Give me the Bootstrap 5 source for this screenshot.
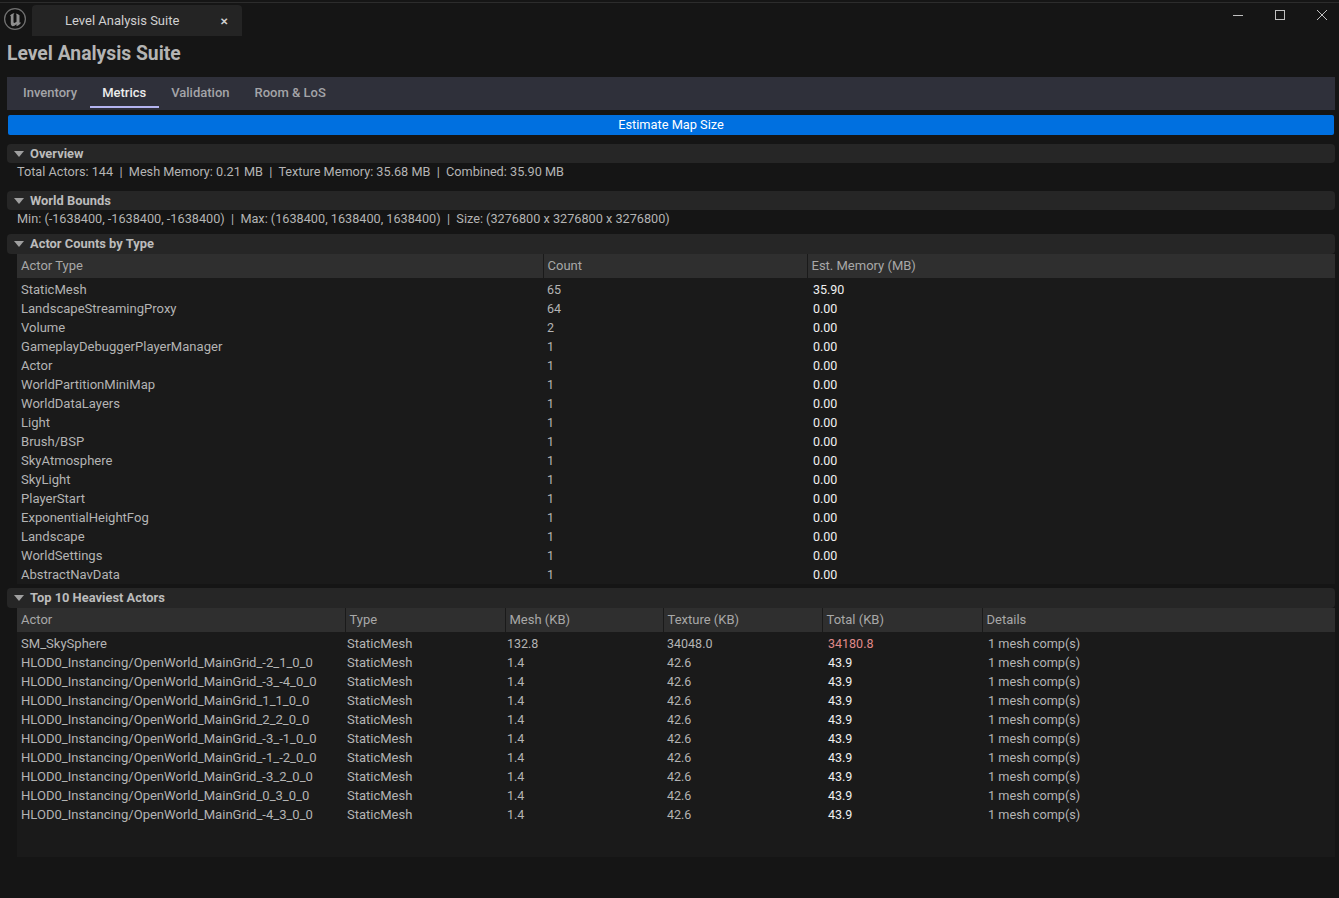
<!DOCTYPE html>
<html lang="en">
<head>
    <meta charset="UTF-8">
    <title>Level Analysis Suite</title>
    <link href="https://cdn.jsdelivr.net/npm/bootstrap@5.3.0/dist/css/bootstrap.min.css" rel="stylesheet">
    <style>
        html, body { height: 100%; }
        body { background: #151515; color: #b8b8b8; font-family: Roboto, "Liberation Sans", sans-serif; font-size: 12.5px; overflow: hidden; }
        .title-bar { height: 36px; border-top: 1px solid #2c2c2c; margin-top: 2px; padding-left: 3px; }
        .ue-logo { width: 24px; height: 24px; margin-top: 4px; }
        .doc-tab { width: 210px; height: 31px; margin-left: 5px; margin-top: 2px; background: #242424; border-radius: 4px 4px 0 0; color: #d0d0d0; padding: 1px 14px 0 33px; font-size: 13px; }
        .doc-close { font-size: 10px; font-weight: 700; color: #d0d0d0; }
        .win-group { margin-right: -4px; }
        .win-btn { width: 42px; height: 24px; }
        .page-title { font-size: 19.3px; font-weight: 700; color: #b4b4b4; margin: 0; padding: 4px 7px 0; line-height: 24px; height: 39px; }
        .main-area { padding: 0 4px 0 7px; }
        .tab-strip { background: #2f303a; height: 33px; padding-left: 3.5px; }
        .tab-item { padding: 0 12.5px; height: 31px; line-height: 31px; color: #a4a4a8; font-weight: 500; font-size: 13px; }
        .tab-item.on { color: #ececec; border-bottom: 2px solid #b4b4f0; }
        .map-btn { display: block; width: calc(100% - 2px); height: 20px; margin: 5px 1px 9px; padding: 0; border: 0; border-radius: 2px; background: #0070e0; color: #fff; font-size: 12.8px; line-height: 20px; }
        .sec-head { background: #262626; border-radius: 4px; height: 19px; line-height: 19px; padding-left: 7px; font-weight: 700; color: #bcbcbc; font-size: 12.9px; }
        .sec-head.tall { height: 20px; }
        .sec-head svg { width: 10px; height: 6px; margin-right: 6px; vertical-align: 1px; }
        .sec-text { padding-left: 10px; height: 18px; line-height: 18px; color: #b4b4b4; font-size: 12.7px; }
        .gap-a { margin-bottom: 10px; }
        .gap-b { margin-bottom: 6px; }
        .gap-c { margin-bottom: 4px; }
        .tbl-wrap { margin-left: 10px; background: #1a1a1a; }
        .data-tbl { table-layout: fixed; width: 100%; margin: 0; --bs-table-bg: transparent; --bs-table-color: #b4b4b4; border-color: transparent; font-size: 12.5px; }
        .data-tbl th { background: #2f2f2f; color: #a8a8a8; font-weight: 400; font-size: 13px; height: 24px; padding: 0 4px; border: 0; border-left: 1px solid #1a1a1a; line-height: 24px; }
        .data-tbl th:first-child { border-left: 0; }
        .data-tbl td { height: 19px; padding: 0 4px; line-height: 19px; border: 0; white-space: nowrap; overflow: hidden; }
        .data-tbl td:first-child { font-size: 13.05px; }
        .data-tbl tbody tr:first-child td { height: 21px; padding-top: 2px; }
        .val-strong { color: #f0f0f0 !important; padding-left: 6px !important; }
        .val-hot { color: #e08a8a !important; padding-left: 6px !important; }
        .val-kind { font-size: 13px; padding-left: 2px !important; }
        .val-note { font-size: 12.7px; padding-left: 6px !important; }
        .shift-n { padding-left: 2px !important; }
        .c-type { width: 526px; } .c-count { width: 264px; }
        .c-actor { width: 328px; } .c-kind { width: 160px; } .c-mesh { width: 158px; } .c-tex { width: 159px; } .c-total { width: 160px; }
        .tail { height: 33px; }
    </style>
</head>
<body>

<div class="title-bar d-flex">
    <svg class="ue-logo" viewBox="0 0 24 24">
        <circle cx="12" cy="12" r="10.4" fill="#111" stroke="#707070" stroke-width="1.3"/>
        <path d="M7 8.500C8 7.500 9.500 6.500 11.500 6 10.800 6.800 10.500 7.500 10.500 8.500V15C10.500 16.200 11.800 16.300 13.500 14.800V8.500C13.500 7.600 13.200 7 12.600 6.500 14 6.600 15.300 7.200 16.500 8.200V15.500C17 15.800 17.600 15.600 18.200 15 17.500 17 15.800 18.600 13.500 19.200V17.300C12 18.600 10.800 19.300 9.800 19.300 8.600 19 7.800 18 7.800 16.500V9.500C7.800 9 7.500 8.700 7 8.500Z" fill="#8e8e8e"/>
    </svg>
    <div class="doc-tab d-flex align-items-center justify-content-between">
        <span>Level Analysis Suite</span>
        <span class="doc-close">&#10005;</span>
    </div>
    <div class="ms-auto d-flex win-group">
        <div class="win-btn d-flex align-items-center justify-content-center">
            <svg width="12" height="12" viewBox="0 0 12 12"><path d="M1 6.500h10" stroke="#c0c0c0" stroke-width="1"/></svg>
        </div>
        <div class="win-btn d-flex align-items-center justify-content-center">
            <svg width="12" height="12" viewBox="0 0 12 12"><rect x="1.500" y="1.500" width="9" height="9" fill="none" stroke="#c0c0c0" stroke-width="1"/></svg>
        </div>
        <div class="win-btn d-flex align-items-center justify-content-center">
            <svg width="12" height="12" viewBox="0 0 12 12"><path d="M1 1l10 10M11 1L1 11" stroke="#c0c0c0" stroke-width="1"/></svg>
        </div>
    </div>
</div>

<h1 class="page-title">Level Analysis Suite</h1>

<div class="main-area">
    <div class="tab-strip d-flex">
        <div class="tab-item">Inventory</div>
        <div class="tab-item on">Metrics</div>
        <div class="tab-item">Validation</div>
        <div class="tab-item">Room &amp; LoS</div>
    </div>
    <button type="button" class="btn map-btn">Estimate Map Size</button>

    <div class="sec-head"><svg viewBox="0 0 10 6"><path d="M0 0h10L5 6z" fill="#a0a0a0"/></svg>Overview</div>
    <div class="sec-text gap-a">Total Actors: 144&nbsp; |&nbsp; Mesh Memory: 0.21 MB&nbsp; |&nbsp; Texture Memory: 35.68 MB&nbsp; |&nbsp; Combined: 35.90 MB</div>

    <div class="sec-head"><svg viewBox="0 0 10 6"><path d="M0 0h10L5 6z" fill="#a0a0a0"/></svg>World Bounds</div>
    <div class="sec-text gap-b">Min: (-1638400, -1638400, -1638400)&nbsp; |&nbsp; Max: (1638400, 1638400, 1638400)&nbsp; |&nbsp; Size: (3276800 x 3276800 x 3276800)</div>

    <div class="sec-head tall"><svg viewBox="0 0 10 6"><path d="M0 0h10L5 6z" fill="#a0a0a0"/></svg>Actor Counts by Type</div>
    <div class="tbl-wrap gap-c">
        <table class="table data-tbl">
            <colgroup><col class="c-type"><col class="c-count"><col></colgroup>
            <thead><tr><th>Actor Type</th><th>Count</th><th>Est. Memory (MB)</th></tr></thead>
            <tbody id="countRows"></tbody>
        </table>
    </div>

    <div class="sec-head tall"><svg viewBox="0 0 10 6"><path d="M0 0h10L5 6z" fill="#a0a0a0"/></svg>Top 10 Heaviest Actors</div>
    <div class="tbl-wrap">
        <table class="table data-tbl">
            <colgroup><col class="c-actor"><col class="c-kind"><col class="c-mesh"><col class="c-tex"><col class="c-total"><col></colgroup>
            <thead><tr><th>Actor</th><th>Type</th><th>Mesh (KB)</th><th>Texture (KB)</th><th>Total (KB)</th><th>Details</th></tr></thead>
            <tbody id="heavyRows"></tbody>
        </table>
        <div class="tail"></div>
    </div>
</div>

<script src="https://cdn.jsdelivr.net/npm/bootstrap@5.3.0/dist/js/bootstrap.bundle.min.js"></script>
<script>
    const counts = [
      ['StaticMesh', 65, '35.90'], ['LandscapeStreamingProxy', 64, '0.00'], ['Volume', 2, '0.00'],
      ['GameplayDebuggerPlayerManager', 1, '0.00'], ['Actor', 1, '0.00'], ['WorldPartitionMiniMap', 1, '0.00'],
      ['WorldDataLayers', 1, '0.00'], ['Light', 1, '0.00'], ['Brush/BSP', 1, '0.00'], ['SkyAtmosphere', 1, '0.00'],
      ['SkyLight', 1, '0.00'], ['PlayerStart', 1, '0.00'], ['ExponentialHeightFog', 1, '0.00'],
      ['Landscape', 1, '0.00'], ['WorldSettings', 1, '0.00'], ['AbstractNavData', 1, '0.00']
    ];
    document.getElementById('countRows').innerHTML = counts.map(c => `
      <tr><td>${c[0]}</td><td>${c[1]}</td><td class="val-strong">${c[2]}</td></tr>`).join('');

    const grid = ['-2_1_0_0', '-3_-4_0_0', '1_1_0_0', '2_2_0_0', '-3_-1_0_0', '-1_-2_0_0', '-3_2_0_0', '0_3_0_0', '-4_3_0_0'];
    const row = (name, mesh, tex, total, cls) => `
      <tr><td>${name}</td><td class="val-kind">StaticMesh</td><td class="shift-n">${mesh}</td><td>${tex}</td><td class="${cls}">${total}</td><td class="val-note">1 mesh comp(s)</td></tr>`;
    document.getElementById('heavyRows').innerHTML =
      row('SM_SkySphere', '132.8', '34048.0', '34180.8', 'val-hot') +
      grid.map(g => row('HLOD0_Instancing/OpenWorld_MainGrid_' + g, '1.4', '42.6', '43.9', 'val-strong')).join('');
</script>

</body>
</html>
